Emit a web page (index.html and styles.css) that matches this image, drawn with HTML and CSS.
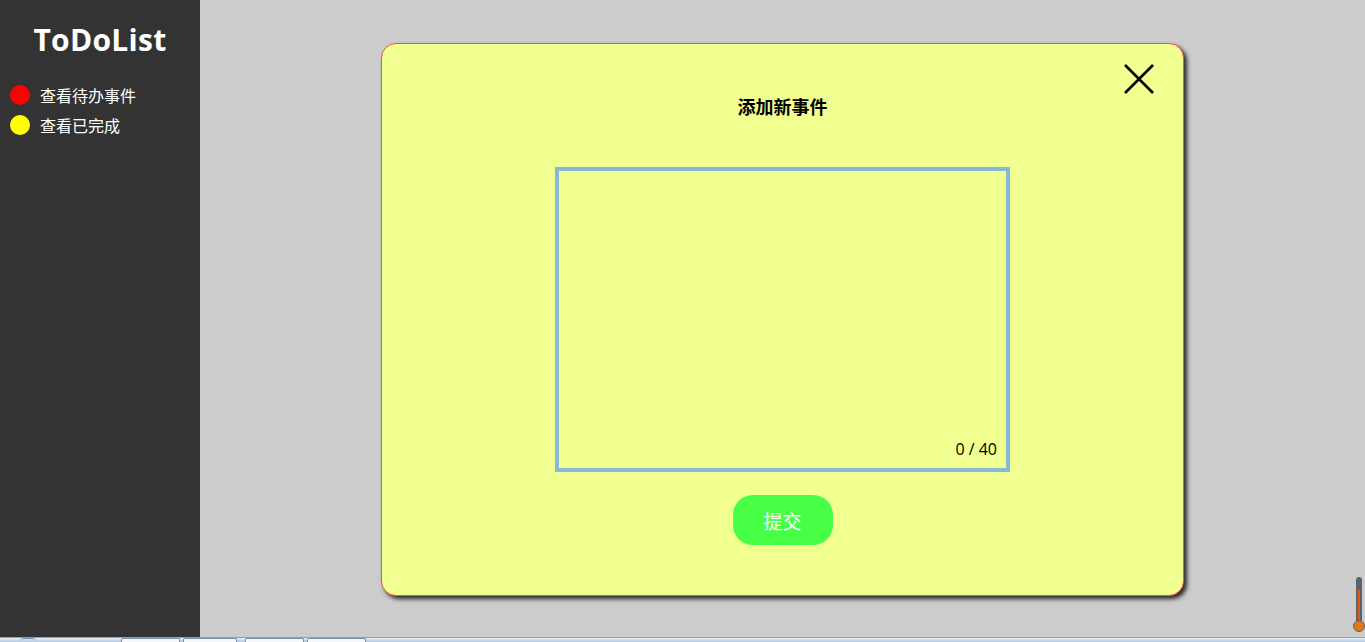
FILE: index.html
```html
<!DOCTYPE html>
<html lang="zh">
<head>
<meta charset="utf-8">
<title>ToDoList</title>
<link rel="stylesheet" href="styles.css">
</head>
<body>
<div class="app">
  <aside class="sidebar">
    <h1 class="logo">ToDoList</h1>
    <ul class="nav">
      <li class="nav-item"><span class="dot dot-red"></span>查看待办事件</li>
      <li class="nav-item"><span class="dot dot-yellow"></span>查看已完成</li>
    </ul>
  </aside>
  <main class="main">
    <section class="modal">
      <button class="close" aria-label="关闭">
        <svg width="32" height="32" viewBox="0 0 32 32"><path d="M2 2 L30 30 M30 2 L2 30" stroke="#000" stroke-width="2.6" fill="none"/></svg>
      </button>
      <h2 class="modal-title">添加新事件</h2>
      <div class="input-box">
        <span class="counter">0 / 40</span>
      </div>
      <button class="submit">提交</button>
    </section>
    <svg class="thermo" width="12" height="58" viewBox="0 0 12 58">
      <rect x="3" y="1" width="6" height="48" rx="3" fill="#5a6470"/>
      <rect x="5" y="14" width="2" height="36" fill="#e05a10"/>
      <circle cx="6" cy="50" r="5.5" fill="#e07a10" stroke="#5a6470" stroke-width="1"/>
    </svg>
  </main>
</div>
<div class="taskbar">
  <span class="tb-start"></span>
  <span class="tb-tab t1"></span>
  <span class="tb-tab t2"></span>
  <span class="tb-tab t3"></span>
  <span class="tb-tab t4"></span>
</div>
</body>
</html>
```
FILE: styles.css
```css
* { box-sizing: border-box; }
html, body { margin: 0; padding: 0; }
body {
  width: 1365px;
  height: 642px;
  overflow: hidden;
  font-family: "Noto Sans CJK SC", "Open Sans", sans-serif;
  background: #ccc;
}
.app {
  display: flex;
  height: 637px;
}
.sidebar {
  width: 200px;
  flex: none;
  background: #333;
  color: #fff;
}
.logo {
  margin: 0;
  padding-top: 19px;
  height: 79px;
  text-align: center;
  font-family: "Open Sans", "Noto Sans CJK SC", sans-serif;
  font-weight: 700;
  font-size: 30px;
  line-height: 42px;
  letter-spacing: 0.3px;
}
.nav {
  list-style: none;
  margin: 0;
  padding: 0 0 0 10px;
}
.nav-item {
  display: flex;
  align-items: center;
  height: 30px;
  font-size: 16px;
  line-height: 30px;
  margin-top: 1px;
}
.nav-item + .nav-item { margin-top: 0; }
.dot {
  width: 20px;
  height: 20px;
  border-radius: 50%;
  margin-right: 10px;
  flex: none;
}
.dot-red { background: #f00; }
.dot-yellow { background: #ff0; }
.main {
  flex: 1;
  position: relative;
  display: flex;
  justify-content: center;
  align-items: flex-start;
  padding-top: 43px;
  background: #ccc;
}
.modal {
  position: relative;
  width: 803px;
  height: 553px;
  background: #f0ff90;
  border: 1px solid #ff4d4d;
  border-radius: 15px;
  box-shadow: 3px 3px 4px #2a2a2a;
  display: flex;
  flex-direction: column;
  align-items: center;
}
.close {
  position: absolute;
  top: 19px;
  right: 28px;
  width: 32px;
  height: 32px;
  padding: 0;
  border: none;
  background: transparent;
}
.close svg { display: block; }
.modal-title {
  margin: 49px 0 0;
  font-size: 18px;
  line-height: 26px;
  font-weight: 700;
  color: #000;
}
.input-box {
  position: relative;
  margin-top: 48px;
  width: 455px;
  height: 305px;
  border: 3px solid #84b8de;
  box-shadow: inset 0 0 0 1px #8db9cf;
}
.counter {
  position: absolute;
  right: 10px;
  bottom: 10px;
  font-size: 16px;
  line-height: 20px;
  color: #000;
  font-family: "Open Sans", "Noto Sans CJK SC", sans-serif;
}
.submit {
  margin-top: 23px;
  width: 100px;
  height: 50px;
  border: none;
  border-radius: 20px;
  background: #48ff48;
  color: #fff;
  font-family: "Noto Sans CJK SC", sans-serif;
  font-size: 19px;
  padding: 0;
}
.thermo {
  position: absolute;
  right: 0;
  bottom: 3px;
}
.taskbar {
  position: relative;
  height: 5px;
  background: linear-gradient(#e8f0f8, #b4c8dc);
  border-top: 1px solid #8aa0b8;
}
.tb-start {
  position: absolute;
  left: 20px;
  top: 0;
  width: 16px;
  height: 4px;
  border-top: 1px solid #6a8fb8;
  border-radius: 8px 8px 0 0;
}
.tb-tab {
  position: absolute;
  top: 0;
  height: 4px;
  background: #f4f8fc;
  border: 1px solid #7890a8;
  border-bottom: none;
  border-radius: 2px 2px 0 0;
}
.t1 { left: 121px; width: 59px; }
.t2 { left: 183px; width: 54px; }
.t3 { left: 245px; width: 59px; }
.t4 { left: 307px; width: 59px; }
```
